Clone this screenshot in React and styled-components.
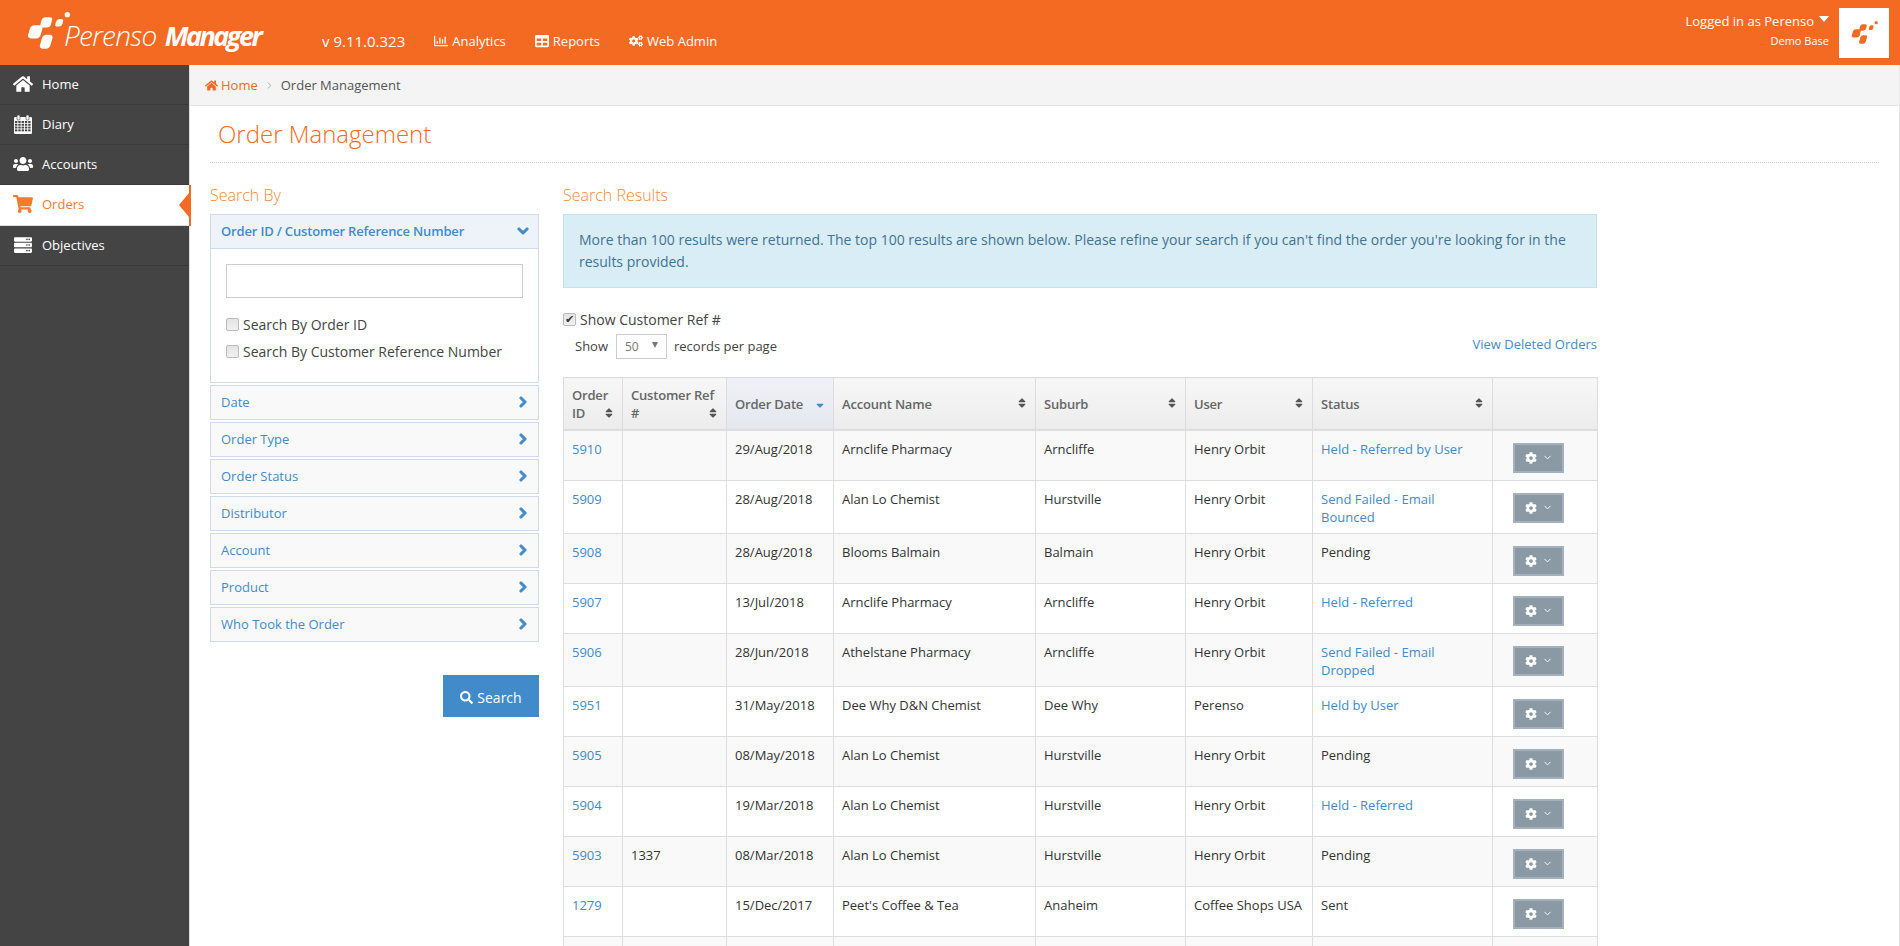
import React from "react";
import styled, { createGlobalStyle } from "styled-components";
import {
  FaHome,
  FaUsers,
  FaShoppingCart,
  FaServer,
  FaRegChartBar,
  FaTable,
  FaCogs,
  FaCog,
  FaChevronDown,
  FaChevronRight,
  FaSearch,
  FaSort,
  FaSortDown,
} from "react-icons/fa";
import { ChevronDown, ChevronRight } from "lucide-react";

const GlobalStyle = createGlobalStyle`
  html, body {
    margin: 0;
    height: 100%;
    overflow: hidden;
    background: #fff;
  }
  body {
    font-family: "Open Sans", "Liberation Sans", sans-serif;
    font-size: 13px;
    color: #333;
  }
  * { box-sizing: border-box; }
`;

const Page = styled.div`
  height: 946px;
  display: flex;
  flex-direction: column;
  overflow: hidden;
`;

const Header = styled.header`
  flex: none;
  height: 65px;
  background: #f46a23;
  color: #fff;
  display: flex;
  align-items: center;
  padding: 0 11px 0 27px;
`;

const Brand = styled.div`
  width: 295px;
  display: flex;
  align-items: center;
  height: 100%;
`;

const BrandText = styled.span`
  font-size: 28px;
  font-weight: 300;
  font-style: italic;
  letter-spacing: -0.7px;
  margin-left: -6px;
  padding-top: 5px;
  white-space: nowrap;
  b {
    font-size: 27px;
    font-weight: 700;
    margin-left: 8px;
    letter-spacing: -2.5px;
  }
`;

const Version = styled.span`
  font-size: 15px;
  margin-right: 29px;
  padding-top: 17px;
`;

const TopLink = styled.a`
  display: inline-flex;
  align-items: center;
  gap: 4px;
  font-size: 13px;
  color: #fff;
  margin-right: 29px;
  padding-top: 17px;
  svg { font-size: 14px; }
`;

const UserBlock = styled.div`
  margin-left: auto;
  text-align: right;
  padding-right: 10px;
  margin-top: -5px;
`;

const UserName = styled.div`
  font-size: 13px;
  line-height: 18px;
  display: flex;
  align-items: center;
  justify-content: flex-end;
  gap: 5px;
  &::after {
    content: "";
    border-style: solid;
    border-width: 6px 5.5px 0;
    border-color: #fff transparent transparent;
    margin-top: -3px;
  }
`;

const UserBase = styled.div`
  font-size: 11px;
  line-height: 16px;
  margin-top: 3px;
`;

const Avatar = styled.div`
  width: 50px;
  height: 50px;
  background: #fff;
  display: flex;
  align-items: center;
  justify-content: center;
  color: #f46a23;
`;

const LogoSlot = styled.span`
  display: flex;
  margin-top: -4px;
`;

const Body = styled.div`
  flex: 1;
  display: flex;
  min-height: 0;
`;

const Sidebar = styled.nav`
  flex: none;
  width: 190px;
  background: #444;
  border-right: 1px solid #ddd;
`;

const NavItem = styled.a`
  position: relative;
  height: ${(p) => (p.$active ? "41px" : "40px")};
  display: flex;
  align-items: center;
  gap: 9px;
  padding: 0 0 2px 13px;
  font-size: 13px;
  font-weight: 400;
  color: ${(p) => (p.$active ? "#f47a30" : "#fff")};
  background: ${(p) => (p.$active ? "#fff" : "transparent")};
  border-bottom: 1px solid ${(p) => (p.$active ? "#ddd" : "#3a3a3a")};
  svg { font-size: 18px; width: 20px; }
  ${(p) =>
    p.$active &&
    `
    width: 191px;
    &::after {
      content: "";
      position: absolute;
      right: 0;
      top: 0;
      width: 2px;
      height: 41px;
      background: #f46a23;
    }
    &::before {
      content: "";
      position: absolute;
      right: 2px;
      top: 8px;
      border-style: solid;
      border-width: 12px 10px 12px 0;
      border-color: transparent #f46a23 transparent transparent;
    }
  `}
`;

const Main = styled.main`
  flex: 1;
  min-width: 0;
  border-right: 1px solid #e8e8e8;
`;

const Breadcrumb = styled.div`
  height: 41px;
  background: #f4f4f4;
  border-bottom: 1px solid #e4e4e4;
  display: flex;
  align-items: center;
  padding-left: 15px;
  font-size: 13px;
  color: #555;
  gap: 6px;
  a {
    color: #f46a23;
    display: inline-flex;
    align-items: center;
    gap: 3px;
  }
`;

const Content = styled.div`
  padding: 0 20px;
`;

const PageTitle = styled.h1`
  margin: 0;
  height: 57px;
  border-bottom: 1px dotted #ccc;
  padding: 11px 0 0 8px;
  font-size: 24px;
  line-height: 34px;
  font-weight: 300;
  color: #f46a23;
`;

const Columns = styled.div`
  display: flex;
  gap: 24px;
  padding-top: 21px;
  width: 1387px;
`;

const LeftCol = styled.div`
  flex: none;
  width: 329px;
`;

const RightCol = styled.div`
  flex: 1;
  min-width: 0;
`;

const SectionTitle = styled.h3`
  margin: 0 0 8px;
  font-size: 16px;
  line-height: 22px;
  font-weight: 300;
  color: #f68a3a;
`;

const Panel = styled.div`
  border: 1px solid #cfdbe8;
  margin-bottom: 2px;
`;

const PanelHead = styled.div`
  height: ${(p) => (p.$open ? "34px" : "33px")};
  display: flex;
  align-items: center;
  justify-content: space-between;
  padding: 0 9px 2px 10px;
  background: ${(p) => (p.$open ? "#eef3fa" : "#f9f9f9")};
  color: #428bca;
  font-size: 13px;
  font-weight: ${(p) => (p.$open ? 600 : 400)};
  letter-spacing: ${(p) => (p.$open ? "-0.17px" : "0")};
  border-bottom: ${(p) => (p.$open ? "1px solid #cfdbe8" : "none")};
  svg {
    font-size: 12px;
    color: #428bca;
    stroke: currentColor;
    stroke-width: 50;
  }
`;

const PanelBody = styled.div`
  padding: 15px 15px 0;
  height: 133px;
`;

const TextInput = styled.input`
  display: block;
  width: 297px;
  height: 34px;
  border: 1px solid #ccc;
  background: #fff;
  margin-bottom: 13px;
`;

const Check = styled.input.attrs({ type: "checkbox" })`
  appearance: none;
  flex: none;
  position: relative;
  margin: 0;
  width: 13px;
  height: 13px;
  border: 1px solid #bbb;
  border-radius: 2px;
  background: linear-gradient(#e4e4e4, #f0f0f0);
  &:checked::after {
    content: "✔";
    position: absolute;
    left: 1px;
    top: -3px;
    font-size: 11px;
    line-height: 16px;
    color: #333;
  }
`;

const CheckRow = styled.label`
  display: flex;
  align-items: center;
  gap: 4px;
  height: 27px;
  font-size: 14px;
  color: #444;
`;

const ButtonRow = styled.div`
  display: flex;
  justify-content: flex-end;
  margin-top: 33px;
`;

const SearchButton = styled.button`
  width: 96px;
  height: 42px;
  border: 0;
  padding: 2px 0 0;
  background: #428bca;
  color: #fff;
  font-family: inherit;
  font-size: 14px;
  display: inline-flex;
  align-items: center;
  justify-content: center;
  gap: 4px;
  svg { font-size: 13px; }
`;

const Alert = styled.div`
  height: 74px;
  padding: 14px 15px;
  background: #d9edf7;
  border: 1px solid #c5e3ec;
  color: #3f7391;
  font-size: 14px;
  line-height: 21.5px;
`;

const ShowRef = styled.label`
  display: flex;
  align-items: center;
  gap: 4px;
  margin-top: 21px;
  height: 20px;
  font-size: 14px;
  color: #444;
`;

const TableBar = styled.div`
  display: flex;
  align-items: center;
  justify-content: space-between;
  height: 26px;
  margin-top: 4px;
  padding-left: 12px;
  color: #444;
  a {
    color: #428bca;
    font-size: 13px;
    margin-top: -5px;
  }
`;

const PageSize = styled.div`
  display: flex;
  align-items: center;
  gap: 8px;
`;

const SizeSelect = styled.div`
  width: 51px;
  height: 25px;
  margin-right: -1px;
  border: 1px solid #ccc;
  display: flex;
  align-items: center;
  justify-content: space-between;
  padding: 0 8px;
  font-size: 12px;
  color: #777;
  &::after {
    content: "";
    border-style: solid;
    border-width: 6px 3px 0;
    border-color: #777 transparent transparent;
    margin-top: -2px;
  }
`;

const Table = styled.table`
  width: 1034px;
  margin-top: 18px;
  border-collapse: collapse;
  table-layout: fixed;
  border: 1px solid #ddd;
`;

const Th = styled.th`
  height: 52px;
  padding: 2px 8px 0;
  text-align: left;
  vertical-align: middle;
  font-size: 13px;
  font-weight: 600;
  letter-spacing: -0.2px;
  line-height: 18px;
  color: #666;
  border: 1px solid #ddd;
  border-bottom: 2px solid #ddd;
  background: ${(p) =>
    p.$sorted
      ? "linear-gradient(#eff1f6, #e4e7ee)"
      : "linear-gradient(#f7f7f7, #ececec)"};
`;

const ThInner = styled.div`
  position: relative;
  svg {
    position: absolute;
    right: -1px;
    font-size: 12px;
    color: ${(p) => (p.$sorted ? "#428bca" : "#555")};
    ${(p) => (p.$low ? "bottom: 3px;" : "top: 2px;")}
  }
`;

const Tr = styled.tr`
  background: ${(p) => (p.$stripe ? "#f9f9f9" : "#fff")};
`;

const Td = styled.td`
  padding: 9px 8px 7px;
  vertical-align: top;
  font-size: 13px;
  line-height: 18px;
  border: 1px solid #ddd;
  color: #333;
  a { color: #428bca; }
`;

const GearButton = styled.div`
  width: 51px;
  height: 30px;
  margin: 3px 0 0 12px;
  background: #8a99a3;
  border: 2px solid #a3b1bc;
  color: #fff;
  display: flex;
  align-items: center;
  justify-content: center;
  gap: 5px;
  svg:first-child { font-size: 12px; }
`;

// one of the rounded, leaning blocks of the Perenso mark
function Blob({ x, y, w, h, r }) {
  const cx = x + w / 2;
  const cy = y + h / 2;
  return (
    <rect
      x={x}
      y={y}
      width={w}
      height={h}
      rx={r}
      transform={`translate(${cx} ${cy}) skewX(-16) translate(${-cx} ${-cy})`}
    />
  );
}

function LogoMark({ width, height }) {
  return (
    <svg width={width} height={height} viewBox="20 14 130 112" fill="currentColor">
      <Blob x={26} y={54} w={38} h={40} r={11} />
      <Blob x={62} y={30} w={32} h={31} r={10} />
      <Blob x={62} y={83} w={32} h={42} r={11} />
      <Blob x={107} y={35} w={21} h={23} r={8} />
      <circle cx={142} cy={22} r={8} />
    </svg>
  );
}

function CalendarIcon() {
  const cells = [];
  for (let row = 0; row < 4; row++) {
    for (let col = 0; col < 5; col++) {
      cells.push(<rect key={`${row}-${col}`} x={2 + col * 3.3} y={7 + row * 2.8} width={2.4} height={1.9} fill="#444" />);
    }
  }
  return (
    <svg width="20" height="20" viewBox="0 0 20 20" fill="currentColor">
      <rect x={1} y={3} width={18} height={17} rx={1.2} />
      <rect x={4} y={1} width={3} height={5} rx={1} stroke="#444" strokeWidth={0.6} />
      <rect x={13} y={1} width={3} height={5} rx={1} stroke="#444" strokeWidth={0.6} />
      {cells}
    </svg>
  );
}

const navItems = [
  { label: "Home", icon: FaHome },
  { label: "Diary", icon: CalendarIcon },
  { label: "Accounts", icon: FaUsers },
  { label: "Orders", icon: FaShoppingCart, active: true },
  { label: "Objectives", icon: FaServer },
];

const filters = ["Date", "Order Type", "Order Status", "Distributor", "Account", "Product", "Who Took the Order"];

const columns = [
  { label: "Order ID", width: 59, low: true },
  { label: "Customer Ref #", width: 104, low: true },
  { label: "Order Date", width: 107, sorted: true },
  { label: "Account Name", width: 202 },
  { label: "Suburb", width: 150 },
  { label: "User", width: 127 },
  { label: "Status", width: 180 },
  { label: "", width: 105 },
];

const orders = [
  ["5910", "", "29/Aug/2018", "Arnclife Pharmacy", "Arncliffe", "Henry Orbit", "Held - Referred by User", true],
  ["5909", "", "28/Aug/2018", "Alan Lo Chemist", "Hurstville", "Henry Orbit", "Send Failed - Email Bounced", true],
  ["5908", "", "28/Aug/2018", "Blooms Balmain", "Balmain", "Henry Orbit", "Pending", false],
  ["5907", "", "13/Jul/2018", "Arnclife Pharmacy", "Arncliffe", "Henry Orbit", "Held - Referred", true],
  ["5906", "", "28/Jun/2018", "Athelstane Pharmacy", "Arncliffe", "Henry Orbit", "Send Failed - Email Dropped", true],
  ["5951", "", "31/May/2018", "Dee Why D&N Chemist", "Dee Why", "Perenso", "Held by User", true],
  ["5905", "", "08/May/2018", "Alan Lo Chemist", "Hurstville", "Henry Orbit", "Pending", false],
  ["5904", "", "19/Mar/2018", "Alan Lo Chemist", "Hurstville", "Henry Orbit", "Held - Referred", true],
  ["5903", "1337", "08/Mar/2018", "Alan Lo Chemist", "Hurstville", "Henry Orbit", "Pending", false],
  ["1279", "", "15/Dec/2017", "Peet's Coffee & Tea", "Anaheim", "Coffee Shops USA", "Sent", false],
  ["", "", "", "", "", "", "", false],
];

function App() {
  return (
    <Page>
      <GlobalStyle />
      <Header>
        <Brand>
          <LogoSlot>
            <LogoMark width={43} height={37} />
          </LogoSlot>
          <BrandText>
            Perenso<b>Manager</b>
          </BrandText>
        </Brand>
        <Version>v 9.11.0.323</Version>
        <TopLink><FaRegChartBar /> Analytics</TopLink>
        <TopLink><FaTable /> Reports</TopLink>
        <TopLink><FaCogs /> Web Admin</TopLink>
        <UserBlock>
          <UserName>Logged in as Perenso</UserName>
          <UserBase>Demo Base</UserBase>
        </UserBlock>
        <Avatar>
          <LogoMark width={27} height={23} />
        </Avatar>
      </Header>
      <Body>
        <Sidebar>
          {navItems.map(({ label, icon: Icon, active }) => (
            <NavItem key={label} $active={active}>
              <Icon />
              {label}
            </NavItem>
          ))}
        </Sidebar>
        <Main>
          <Breadcrumb>
            <a><FaHome /> Home</a>
            <ChevronRight size={11} color="#aaa" />
            <span>Order Management</span>
          </Breadcrumb>
          <Content>
            <PageTitle>Order Management</PageTitle>
            <Columns>
              <LeftCol>
                <SectionTitle>Search By</SectionTitle>
                <Panel>
                  <PanelHead $open>
                    Order ID / Customer Reference Number
                    <FaChevronDown />
                  </PanelHead>
                  <PanelBody>
                    <TextInput />
                    <CheckRow><Check /> Search By Order ID</CheckRow>
                    <CheckRow><Check /> Search By Customer Reference Number</CheckRow>
                  </PanelBody>
                </Panel>
                {filters.map((name) => (
                  <Panel key={name}>
                    <PanelHead>
                      {name}
                      <FaChevronRight />
                    </PanelHead>
                  </Panel>
                ))}
                <ButtonRow>
                  <SearchButton><FaSearch /> Search</SearchButton>
                </ButtonRow>
              </LeftCol>
              <RightCol>
                <SectionTitle>Search Results</SectionTitle>
                <Alert>
                  More than 100 results were returned. The top 100 results are shown below. Please refine your search if you can't find the order you're looking for in the results provided.
                </Alert>
                <ShowRef><Check defaultChecked /> Show Customer Ref #</ShowRef>
                <TableBar>
                  <PageSize>
                    Show <SizeSelect>50</SizeSelect> records per page
                  </PageSize>
                  <a>View Deleted Orders</a>
                </TableBar>
                <Table>
                  <colgroup>
                    {columns.map((c, i) => (
                      <col key={i} width={c.width} />
                    ))}
                  </colgroup>
                  <thead>
                    <tr>
                      {columns.map((c, i) => (
                        <Th key={i} $sorted={c.sorted}>
                          {c.label && (
                            <ThInner $low={c.low} $sorted={c.sorted}>
                              {c.label}
                              {c.sorted ? <FaSortDown /> : <FaSort />}
                            </ThInner>
                          )}
                        </Th>
                      ))}
                    </tr>
                  </thead>
                  <tbody>
                    {orders.map((o, i) => (
                      <Tr key={i} $stripe={i % 2 === 0}>
                        <Td><a>{o[0]}</a></Td>
                        <Td>{o[1]}</Td>
                        <Td>{o[2]}</Td>
                        <Td>{o[3]}</Td>
                        <Td>{o[4]}</Td>
                        <Td>{o[5]}</Td>
                        <Td>{o[7] ? <a>{o[6]}</a> : o[6]}</Td>
                        <Td>
                          <GearButton><FaCog /><ChevronDown size={11} strokeWidth={2} /></GearButton>
                        </Td>
                      </Tr>
                    ))}
                  </tbody>
                </Table>
              </RightCol>
            </Columns>
          </Content>
        </Main>
      </Body>
    </Page>
  );
}

export default App;
